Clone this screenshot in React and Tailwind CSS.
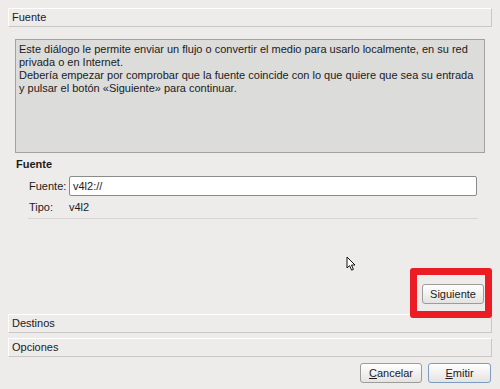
const FONT = { fontFamily: '"Liberation Sans", Arial, sans-serif' };

function SectionHeader({ label, className = "" }) {
  return (
    <div
      className={`flex h-[19px] items-center border border-t-white border-l-white border-r-[#c9c8c6] border-b-[#c9c8c6] pl-[3px] ${className}`}
    >
      {label}
    </div>
  );
}

function Button({ children, primary, className = "" }) {
  return (
    <button
      className={`flex h-[20px] items-center justify-center rounded-[3px] border bg-gradient-to-b from-white to-[#e4e3e1] text-[11px] text-[#1b1b1b] ${
        primary ? "border-[#7e9bc2]" : "border-[#9d9c9a]"
      } ${className}`}
    >
      {children}
    </button>
  );
}

function Cursor() {
  return (
    <svg className="absolute left-[346px] top-[256px]" width="12" height="16" viewBox="0 0 12 16">
      <path
        d="M1 1 L1 12 L3.6 9.6 L5.6 14.2 L7.4 13.4 L5.5 9 L9 9 Z"
        fill="#ffffff"
        stroke="#111111"
        strokeWidth="1"
        strokeLinejoin="miter"
      />
    </svg>
  );
}

export default function App() {
  return (
    <div
      className="relative flex h-[389px] w-[500px] flex-col overflow-hidden bg-[#edeceb] px-[8px] pt-[8px] text-[11px] leading-[13px] text-[#1b1b1b]"
      style={FONT}
    >
      <SectionHeader label="Fuente" className="h-[18px]" />

      <div className="mx-[7px] mt-[12px] h-[114px] border border-[#a2a2a0] bg-[#dcdcdb] pl-[3px] pt-[3px]">
        <p>Este diálogo le permite enviar un flujo o convertir el medio para usarlo localmente, en su red</p>
        <p>privada o en Internet.</p>
        <p>Debería empezar por comprobar que la fuente coincide con lo que quiere que sea su entrada</p>
        <p>y pulsar el botón «Siguiente» para continuar.</p>
      </div>

      <div className="ml-[8px] mt-[5px] font-bold">Fuente</div>

      <div className="mt-[5px] flex items-center">
        <span className="ml-[21px] w-[40px]">Fuente:</span>
        <div className="flex h-[20px] w-[408px] items-center rounded-[2px] border border-[#8b8b8a] bg-white pl-[3px]">
          v4l2://
        </div>
      </div>

      <div className="mt-[5px] flex">
        <span className="ml-[21px] w-[40px]">Tipo:</span>
        <span>v4l2</span>
      </div>

      <div className="ml-[20px] mt-[4px] h-px w-[450px] bg-[#d6d5d3]" />

      <div className="mt-[65px] flex justify-end pr-[8px]">
        <Button className="w-[62px]">Siguiente</Button>
      </div>

      <SectionHeader label="Destinos" className="mt-[10px]" />
      <SectionHeader label="Opciones" className="mt-[5px] h-[18px]" />

      <div className="mt-[6px] flex justify-end gap-[6px] pr-[1px]">
        <Button className="w-[62px]">
          <span className="underline">C</span>ancelar
        </Button>
        <Button primary className="w-[63px]">
          <span className="underline">E</span>mitir
        </Button>
      </div>

      <Cursor />
      <div className="absolute left-[410px] top-[268px] h-[50px] w-[82px] rounded-[3px] border-[7px] border-[#ec1c24]" />
    </div>
  );
}
